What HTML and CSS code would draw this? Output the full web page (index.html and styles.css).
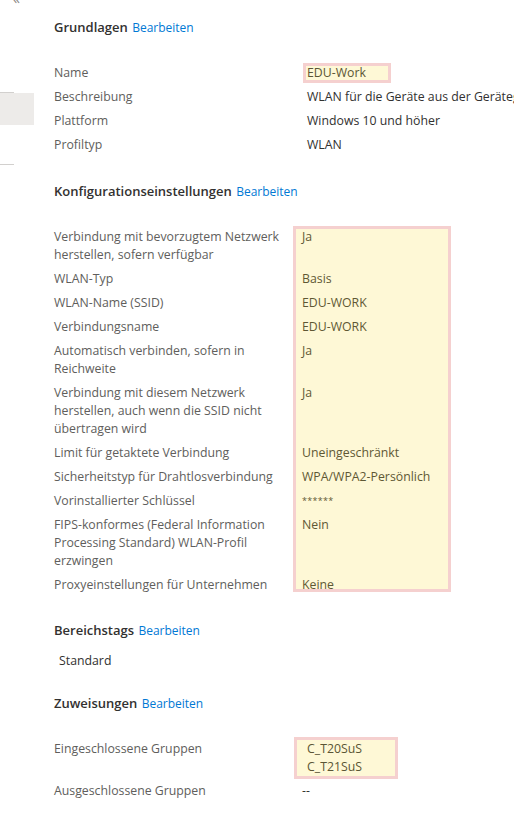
FILE: index.html
```html
<!DOCTYPE html>
<html lang="de">
<head>
<meta charset="utf-8">
<title>WLAN-Profil – Überprüfen</title>
<link rel="stylesheet" href="styles.css">
</head>
<body>
<div class="page">
  <nav class="nav">
    <div class="collapse">«</div>
    <div class="nav-sep"></div>
    <div class="nav-item selected"></div>
    <div class="nav-item"></div>
    <div class="nav-sep"></div>
  </nav>

  <main class="main">
    <section class="section">
      <h2 class="sec-head">Grundlagen <a href="#" class="edit">Bearbeiten</a></h2>
      <div class="props basic">
        <div class="label">Name</div>
        <div class="value"><span class="hl-inline">EDU-Work</span></div>
        <div class="label">Beschreibung</div>
        <div class="value">WLAN für die Geräte aus der Gerätegruppe EDU-Work</div>
        <div class="label">Plattform</div>
        <div class="value">Windows 10 und höher</div>
        <div class="label">Profiltyp</div>
        <div class="value">WLAN</div>
      </div>
    </section>

    <section class="section">
      <h2 class="sec-head head-config">Konfigurationseinstellungen <a href="#" class="edit">Bearbeiten</a></h2>
      <div class="props config">
        <div class="label">Verbindung mit bevorzugtem Netzwerk<br>herstellen, sofern verfügbar</div>
        <div class="value">Ja</div>
        <div class="label">WLAN-Typ</div>
        <div class="value">Basis</div>
        <div class="label">WLAN-Name (SSID)</div>
        <div class="value">EDU-WORK</div>
        <div class="label">Verbindungsname</div>
        <div class="value">EDU-WORK</div>
        <div class="label">Automatisch verbinden, sofern in<br>Reichweite</div>
        <div class="value">Ja</div>
        <div class="label">Verbindung mit diesem Netzwerk<br>herstellen, auch wenn die SSID nicht<br>übertragen wird</div>
        <div class="value">Ja</div>
        <div class="label">Limit für getaktete Verbindung</div>
        <div class="value">Uneingeschränkt</div>
        <div class="label">Sicherheitstyp für Drahtlosverbindung</div>
        <div class="value">WPA/WPA2-Persönlich</div>
        <div class="label">Vorinstallierter Schlüssel</div>
        <div class="value secret">******</div>
        <div class="label">FIPS-konformes (Federal Information<br>Processing Standard) WLAN-Profil<br>erzwingen</div>
        <div class="value">Nein</div>
        <div class="label">Proxyeinstellungen für Unternehmen</div>
        <div class="value">Keine</div>
        <div class="hl-overlay" aria-hidden="true"></div>
      </div>
    </section>

    <section class="section section-tags">
      <h2 class="sec-head head-tags">Bereichstags <a href="#" class="edit">Bearbeiten</a></h2>
      <div class="tag-list">Standard</div>
    </section>

    <section class="section section-assign">
      <h2 class="sec-head">Zuweisungen <a href="#" class="edit">Bearbeiten</a></h2>
      <div class="props assign">
        <div class="label">Eingeschlossene Gruppen</div>
        <div class="value"><div class="hl-block">C_T20SuS<br>C_T21SuS</div></div>
        <div class="label">Ausgeschlossene Gruppen</div>
        <div class="value">--</div>
      </div>
    </section>
  </main>
</div>
</body>
</html>
```

FILE: styles.css
```css
html, body {
  margin: 0;
  padding: 0;
  overflow: hidden;
  background: #ffffff;
}

body {
  font-family: "Open Sans", "Noto Sans", "Liberation Sans", sans-serif;
  font-size: 12.3px;
  color: #323130;
}

.page {
  display: flex;
  width: 100%;
  overflow: hidden;
}

/* left navigation rail */
.nav {
  flex: none;
  width: 34px;
  display: flex;
  flex-direction: column;
}

.collapse {
  margin-top: -8px;
  margin-bottom: 86px;
  padding-left: 13px;
  height: 14px;
  font-size: 14px;
  line-height: 14px;
  color: #8a8886;
}

.nav-sep {
  width: 14px;
  height: 1px;
  background: #d2d0ce;
}

.nav-item {
  height: 32px;
}

.nav-item + .nav-item {
  height: 39px;
}

.nav-item.selected {
  background: #edebe9;
}

/* main content */
.main {
  flex: 1;
  min-width: 0;
  padding: 18px 0 0 20px;
  display: flex;
  flex-direction: column;
  gap: 28px;
}

.sec-head {
  margin: 0 0 27px;
  font-size: 13px;
  line-height: 18px;
  font-weight: 600;
  color: #323130;
}

.head-config {
  margin-bottom: 27px;
}

.head-tags {
  margin-bottom: 12px;
}

.section-tags {
  margin-top: -1px;
}

.section-assign {
  margin-top: -4px;
}

.edit {
  margin-left: 1px;
  font-size: 12px;
  font-weight: 400;
  color: #0078d4;
  text-decoration: none;
}

.props {
  display: grid;
  grid-template-columns: 253px 1fr;
  row-gap: 6px;
  line-height: 18px;
}

.props.config,
.props.assign {
  grid-template-columns: 248px 1fr;
  position: relative;
}

.label {
  color: #605e5c;
  white-space: nowrap;
}

.value {
  color: #323130;
  white-space: nowrap;
}

.secret {
  font-size: 9px;
  letter-spacing: 0.3px;
}

/* highlight annotations */
.hl-inline {
  display: block;
  box-sizing: border-box;
  width: 88px;
  height: 20px;
  margin: -1px 0 -1px -4px;
  padding-left: 1px;
  border: 3px solid #f5d0cf;
  background: #fef8d6;
  line-height: 14px;
  color: #5b5534;
}

.hl-block {
  box-sizing: border-box;
  width: 104px;
  margin: -3px 0 -3px -8px;
  padding-left: 10px;
  border: 3px solid #f5d0cf;
  background: #fef8d6;
  color: #5b5534;
}

.hl-overlay {
  position: absolute;
  top: -2px;
  bottom: 2px;
  left: 239px;
  width: 158px;
  box-sizing: border-box;
  border: 3px solid #f5d0cf;
  background: rgba(250, 223, 69, 0.22);
  pointer-events: none;
}

.tag-list {
  padding-left: 5px;
  line-height: 18px;
  color: #323130;
}
```
